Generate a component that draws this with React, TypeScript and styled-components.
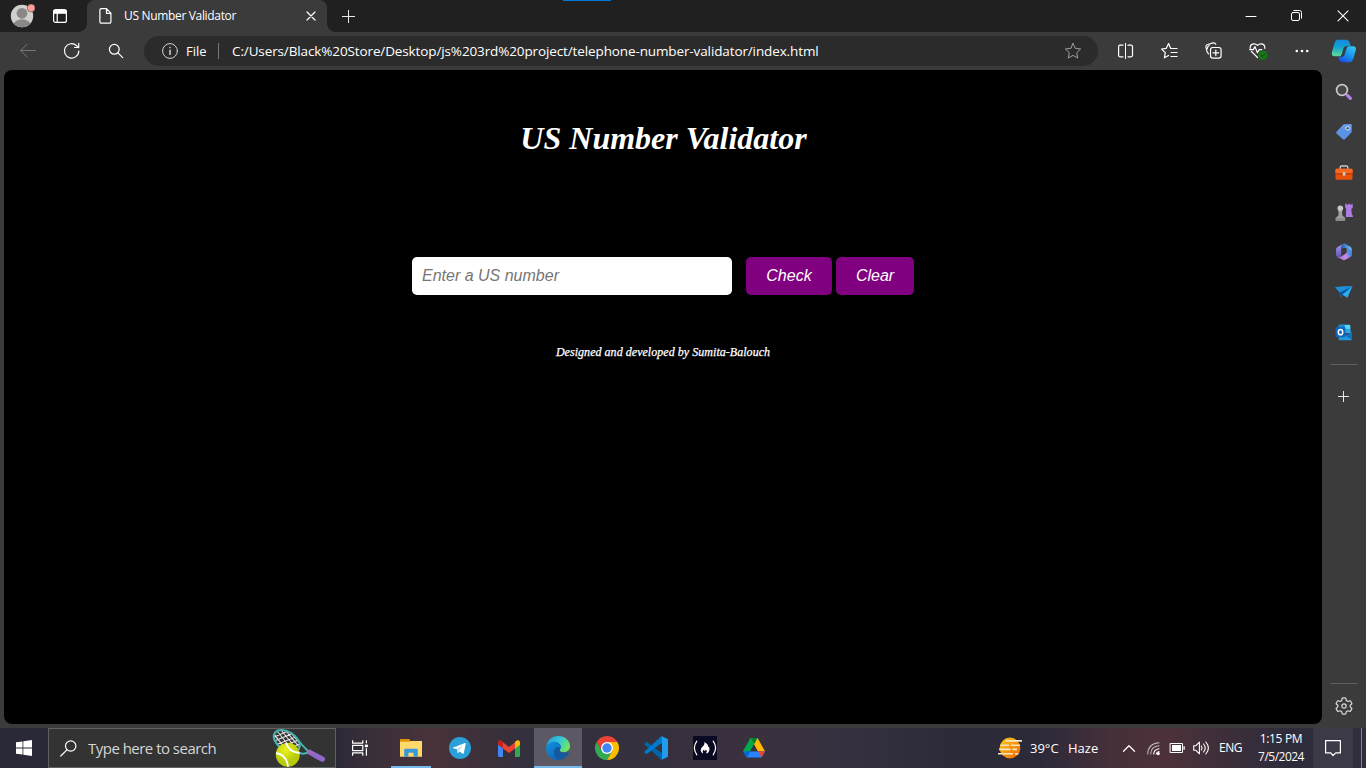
import React from "react";
import styled, { createGlobalStyle } from "styled-components";

const GlobalStyle = createGlobalStyle`
  * { box-sizing: border-box; }
  html, body { margin: 0; padding: 0; background: #3b3b3b; overflow: hidden; }
`;

const Screen = styled.div`
  width: 1366px;
  height: 768px;
  display: flex;
  flex-direction: column;
  background: #3b3b3b;
  overflow: hidden;
  position: relative;
  font-family: "Open Sans", "Noto Sans", sans-serif;
  color: #fff;
`;

const Glyph = styled.svg`
  display: block;
  flex: none;
  overflow: visible;
`;

const Text = styled.span<{ $size: number; $spacing?: number; $color?: string }>`
  font-size: ${(p) => p.$size}px;
  letter-spacing: ${(p) => p.$spacing ?? 0}px;
  color: ${(p) => p.$color ?? "#fff"};
  line-height: 20px;
  white-space: nowrap;
`;

const Slot = styled.div<{ $width: number; $height?: number }>`
  width: ${(p) => p.$width}px;
  height: ${(p) => (p.$height ? `${p.$height}px` : "100%")};
  flex: none;
  display: flex;
  align-items: center;
  justify-content: center;
`;

const TitleBar = styled.header`
  height: 32px;
  flex: none;
  display: flex;
  background: #202020;
`;

const Tab = styled.div`
  width: 240px;
  height: 32px;
  display: flex;
  align-items: center;
  padding: 0 11px 0 12px;
  border-radius: 8px 8px 0 0;
  background: #3b3b3b;
`;

const TabTitle = styled(Text)`
  flex: 1;
  margin-left: 12px;
`;

const WindowButtons = styled.div`
  display: flex;
  margin-left: auto;
`;

const DragStrip = styled.div`
  position: absolute;
  top: 0;
  left: 563px;
  width: 48px;
  height: 1px;
  background: #0078d4;
`;

const TabFlare = styled.div<{ $left: number; $side: "left" | "right" }>`
  position: absolute;
  top: 24px;
  left: ${(p) => p.$left}px;
  width: 8px;
  height: 8px;
  background: radial-gradient(circle at ${(p) => (p.$side === "left" ? "0 0" : "100% 0")}, transparent 7.5px, #3b3b3b 8px);
`;

const Toolbar = styled.div`
  height: 38px;
  flex: none;
  display: flex;
  align-items: center;
  padding: 0 0 0 6px;
`;

const AddressBar = styled.div`
  width: 954px;
  height: 30px;
  margin: 0 6px;
  padding: 0 15px 0 18px;
  display: flex;
  align-items: center;
  border-radius: 15px;
  background: #2b2b2b;
`;

const AddressDivider = styled.div`
  width: 1px;
  height: 16px;
  margin: 0 13px 0 11px;
  background: #777;
`;

const Scheme = styled(Text)`
  width: 21px;
  margin-left: 8px;
`;

const Url = styled(Text)`
  flex: 1;
`;

const Main = styled.div`
  height: 658px;
  flex: none;
  display: flex;
  padding: 0 0 4px 4px;
`;

const Page = styled.main`
  width: 1318px;
  height: 654px;
  display: flex;
  flex-direction: column;
  align-items: center;
  border-radius: 8px;
  background: #000;
`;

const Heading = styled.h1`
  margin: 50px 0 0;
  padding-left: 1px;
  font: italic bold 32px/37px "Liberation Serif", serif;
  color: #fff;
`;

const Form = styled.form`
  display: flex;
  margin-top: 100px;
`;

const NumberInput = styled.input`
  width: 320px;
  height: 38px;
  margin-right: 14px;
  padding: 0 10px;
  border: 0;
  border-radius: 5px;
  background: #fff;
  font: italic 16px "Liberation Sans", sans-serif;
  &::placeholder { color: #757575; }
`;

const ActionButton = styled.button<{ $width: number }>`
  width: ${(p) => p.$width}px;
  height: 38px;
  padding: 0;
  margin-right: 4px;
  border: 0;
  border-radius: 5px;
  background: #800080;
  color: #fff;
  font: italic 16px "Liberation Sans", sans-serif;
  &:last-child { margin-right: 0; }
`;

const Credit = styled.p`
  margin: 49px 0 0;
  font: italic 12px/16px "Liberation Serif", serif;
  letter-spacing: 0.04px;
  color: #fff;
  -webkit-text-stroke: 0.25px #fff;
`;

const Sidebar = styled.aside`
  width: 44px;
  display: flex;
  flex-direction: column;
  align-items: center;
  padding-top: 2px;
`;

const SidebarRule = styled.div<{ $push?: boolean }>`
  width: 28px;
  height: 1px;
  flex: none;
  margin-top: ${(p) => (p.$push ? "auto" : "12px")};
  background: #606060;
`;

const SettingsSlot = styled(Slot)`
  padding-top: 4px;
`;

const Taskbar = styled.footer`
  height: 40px;
  flex: none;
  display: flex;
  background: linear-gradient(90deg, #2a2937 0, #2a2937 330px, #3a2f39 375px, #49333a 430px, #3c303a 480px, #32303d 530px, #35303d 640px, #3b303e 750px, #35303f 850px, #2b2a38 960px, #2c2a39 1040px, #452f39 1110px, #4d3139 1165px, #3b2e3a 1230px, #2e2c3b 1290px, #302e3c 1366px);
`;

const SearchBox = styled.div`
  width: 288px;
  height: 40px;
  display: flex;
  align-items: center;
  padding: 0 9px 0 11px;
  border: 1px solid #606060;
  background: #333;
`;

const SearchLabel = styled(Text)`
  flex: 1;
  margin-left: 11px;
`;

const AppList = styled.div`
  display: flex;
  gap: 1px;
  margin-left: 3px;
`;

const AppButton = styled.div<{ $active?: boolean }>`
  width: 48px;
  height: 40px;
  display: flex;
  align-items: center;
  justify-content: center;
  position: relative;
  background: ${(p) => (p.$active ? "#5c5965" : "transparent")};
`;

const RunningMark = styled.i<{ $wide?: boolean }>`
  position: absolute;
  bottom: 0;
  left: ${(p) => (p.$wide ? 0 : 4)}px;
  right: ${(p) => (p.$wide ? 0 : 4)}px;
  height: 2px;
  background: #76b9ed;
`;

const Tray = styled.div`
  display: flex;
  align-items: center;
  margin-left: auto;
`;

const Weather = styled.div`
  width: 118px;
  display: flex;
  align-items: center;
`;

const Temperature = styled(Text)`
  width: 38px;
  margin-left: 8px;
`;

const Clock = styled.div`
  width: 64px;
  height: 40px;
  display: flex;
  flex-direction: column;
  align-items: center;
  padding-top: 2px;
  & > span { line-height: 18px; }
`;

const Notifications = styled.div`
  width: 40px;
  height: 40px;
  display: flex;
  align-items: center;
  justify-content: center;
  background: #3d3a48;
`;

const ShowDesktop = styled.div`
  width: 5px;
  height: 40px;
  margin-left: 8px;
  border-left: 1px solid #85838c;
`;

type IconProps = { w?: number; h?: number; color?: string; stroke?: number; children: React.ReactNode };

const Icon = ({ w = 24, h = 24, color = "#fff", stroke = 1, children }: IconProps) => (
  <Glyph width={w} height={h} viewBox={`0 0 ${w} ${h}`} fill="none" stroke={color} strokeWidth={stroke} strokeLinecap="round" strokeLinejoin="round">
    {children}
  </Glyph>
);

const Picture = ({ w = 24, h = 24, children }: IconProps) => (
  <Glyph width={w} height={h} viewBox={`0 0 ${w} ${h}`}>{children}</Glyph>
);

const Avatar = () => (
  <Picture>
    <defs><clipPath id="face"><circle cx="12" cy="12" r="11.2" /></clipPath></defs>
    <circle cx="12" cy="12" r="11.2" fill="#d2d0ce" />
    <g clipPath="url(#face)" fill="#8a8886">
      <circle cx="12" cy="9.3" r="5.4" />
      <ellipse cx="12" cy="21" rx="8.5" ry="5.7" />
    </g>
    <circle cx="21.2" cy="4" r="3.9" fill="#ff9f95" stroke="#333" strokeWidth=".5" />
  </Picture>
);

const Workspaces = () => (
  <Icon w={14} h={14} stroke={1.2}>
    <rect x=".6" y=".6" width="12.8" height="12.8" rx="2" />
    <path d="M1 1.5h12v2.7H1z" fill="#fff" /><path d="M4.2 4v9" />
  </Icon>
);

const DocumentIcon = () => (
  <Icon w={13} h={16} stroke={1.2}>
    <path d="M2.3.6h5.2l4.4 4.6v8.6a1.4 1.4 0 0 1-1.4 1.4H2.3A1.4 1.4 0 0 1 .9 13.8V2A1.4 1.4 0 0 1 2.3.6zM7.5.8v4.6h4.2" />
  </Icon>
);

const TabClose = () => (
  <Icon w={10} h={10} stroke={1.2}><path d="m1 1 8 8M9 1 1 9" /></Icon>
);

const WindowClose = () => (
  <Icon w={12} h={12} stroke={1.1}><path d="m1 .8 10 10M11 .8l-10 10" /></Icon>
);

const Plus = ({ size }: { size: number }) => (
  <Icon w={size + 1} h={size} color="#e8e8e8"><path d={`M${size / 2} 0v${size}M0 ${size / 2}h${size}`} strokeLinecap="butt" /></Icon>
);

const Copilot = () => (
  <Picture w={26} h={24}>
    <defs>
      <linearGradient id="cpA" x1=".3" y1="0" x2=".2" y2="1"><stop stopColor="#1689df" /><stop offset=".45" stopColor="#12a5cf" /><stop offset="1" stopColor="#65de98" /></linearGradient>
      <linearGradient id="cpB" x1=".8" y1="0" x2=".2" y2="1"><stop stopColor="#35c4f6" /><stop offset=".55" stopColor="#1591ee" /><stop offset="1" stopColor="#1c4be8" /></linearGradient>
    </defs>
    <path d="M19.5 7.2h2.2q4.2 0 3 4.2l-2.3 8.2q-1 3.6-4.4 3.6h-7q-2.2 0-2.9-2.6l-.7-2.9h1.8q2.2 0 2.8-2l2.2-6.5q.7-2 2.3-2z" fill="url(#cpB)" />
    <path d="M7 .8h8.6q2.3 0 3 2.7l1 3.5h-3.8q-2.4 0-3.2 2.6L10.8 15q-.7 2.2-2.6 2.2H4q-4.2 0-3-4.2l2.4-8.6Q4.4.8 7 .8z" fill="url(#cpA)" />
    <path d="M15.7 7h1.9q-1.3.5-1.8 2l-2.3 7q-.5 1.6-2 1.7H9.3q1.1-.5 1.6-2l2-6.4Q13.6 7 15.7 7z" fill="#34404c" />
  </Picture>
);

const SidebarSearch = () => (
  <Picture w={18} h={18}>
    <path d="M12.4 12.4l3 2.9" stroke="#b481e8" strokeWidth="3.2" strokeLinecap="round" />
    <circle cx="7" cy="7" r="5.4" fill="#464646" stroke="#c9c9c9" strokeWidth="1.7" />
  </Picture>
);

const ShoppingTag = () => (
  <Picture w={18} h={18}>
    <path d="M9.3 1.2 15.8 1q1 0 1 1l-.2 6.5q0 .7-.5 1.2l-6 6.3q-1.2 1.2-2.4 0L1.6 10.4Q.8 9.4 1.7 8.5L8 1.9q.6-.7 1.3-.7z" fill="#659cec" />
    <path d="m.9 9.4 6.3-5 9.4 4.5-6.5 7.1q-1.2 1.2-2.4 0L1.6 10.4z" fill="#4c80d8" opacity=".35" />
    <circle cx="12.6" cy="5.3" r="1.8" fill="#3b587e" stroke="#e3ecf8" strokeWidth="1" />
  </Picture>
);

const Toolbox = () => (
  <Picture w={18} h={16}>
    <g transform="translate(0 1)">
      <path d="M5.3 4V2q0-1 1-1h5.4q1 0 1 1v2" fill="none" stroke="#c9c7c5" strokeWidth="1.4" />
      <rect x=".5" y="3.8" width="17" height="11" rx="1.2" fill="#e8500e" />
      <path d="M.5 4.9q0-1.1 1.1-1.1h14.8q1.1 0 1.1 1.1v3.4H.5z" fill="#f56a20" /><path d="M.5 8.3h17v1.1H.5z" fill="#b93606" />
      <rect x="7.7" y="6.9" width="2.8" height="3.8" rx="1" fill="#ccc" />
    </g>
  </Picture>
);

const Games = () => (
  <Picture w={18} h={18}>
    <path d="M10.2.7h1.7v1.4h1.2V.7h2v1.4h1.2V.7h1.4v4l-1.4 1.2.6 5.2 1 2.2v.7h-7l.2-8.5-.9-1.2z" fill="#b07be4" />
    <circle cx="5.3" cy="5.3" r="2.8" fill="#c9c9c9" />
    <path d="M2.6 7.9h5.4l-1.1 1.2.6 3.6 2.6 2v3H.7v-3l2.6-2 .4-3.6z" fill="#a0a0a0" /><path d="M.7 15.2h9.4v2.6H.7z" fill="#8c8c8c" />
  </Picture>
);

const Microsoft365 = () => (
  <Picture w={18} h={18}>
    <defs>
      <linearGradient id="msA" x1="0" y1="0" x2="0" y2="1"><stop stopColor="#a79bec" /><stop offset="1" stopColor="#5f55b8" /></linearGradient>
      <linearGradient id="msB"><stop stopColor="#2458bb" /><stop offset="1" stopColor="#72c5f8" /></linearGradient>
      <linearGradient id="msC"><stop stopColor="#a86dce" /><stop offset=".6" stopColor="#c58be6" /><stop offset="1" stopColor="#6a7fe0" /></linearGradient>
    </defs>
    <path d="M8.4.7 2.2 4.2Q1 5 1 6.4v5.3q0 1.5 1.3 2.2Q6 15 6.2 11.5V5.7Q6 2.6 8.4.7z" fill="url(#msA)" />
    <path d="M8.4.7q.9-.5 1.8 0l5.1 3q1.4.8 1.4 2.5v3.3q-.2-1.7-1.7-2.4l-3.6-1.8q-2-1-3.6-.1L6.2 6.1Q5.9 2.4 8.4.7z" fill="url(#msB)" />
    <path d="M16.7 8.8v2.9q0 1.5-1.3 2.2l-5 2.9q-1.4.8-2.8 0l-5.3-2.9q2 .6 3.9-.5l4-2.3q1.6-.9 1.6-2.8V5.5l3.2 1.6q1.5.7 1.7 1.7z" fill="url(#msC)" />
    <path d="M11.8 5.5 15 7.1q1.5.7 1.7 1.9v2.7q0 1.2-.7 1.8-3.5-.4-4.2-4z" fill="#3f8fe8" opacity=".75" />
    <path d="m7 6.3 4 2.3-4 2.4z" fill="#3b3b3b" />
  </Picture>
);

const Drop = () => (
  <Picture w={18} h={14}>
    <path d="M.3 2.1 17.5 1.2 12.4 12.8 7.4 9.8 6 12.6 4.7 7.5z" fill="#2cacf0" />
    <path d="M.3 2.1 17.5 1.2 4.7 7.5z" fill="#1b8fd9" /><path d="M4.7 7.5 17.5 1.2 7.4 9.4 6 12.6z" fill="#0a549b" />
  </Picture>
);

const Outlook = () => (
  <Picture w={18} h={18}>
    <g transform="translate(.3 .7)">
      <path d="M3.4 2.2Q3.4 1 4.6 1h9.2Q15 1 15 2.2v7H3.4z" fill="#50d9ff" /><path d="M3.4 2.2Q3.4 1 4.6 1h4.8v4.2h-6z" fill="#138bd8" />
      <path d="M9.4 5.2H15v4H9.4z" fill="#28a8ea" /><path d="M3.4 9l6.8 2.6L16.6 8v7.2q0 1.3-1.3 1.3H4.6q-1.2 0-1.2-1.3z" fill="#2198df" /><path d="m10.3 12 6.3-4v8z" fill="#106ebe" />
      <rect x=".3" y="3.4" width="9.8" height="10.2" rx="1.2" fill="#0f65b9" />
      <ellipse cx="5.2" cy="8.5" rx="2.2" ry="2.6" fill="none" stroke="#fff" strokeWidth="1.5" />
    </g>
  </Picture>
);

const Tennis = () => (
  <Picture w={54} h={36}>
    <defs>
      <radialGradient id="ball" cx=".4" cy=".3"><stop stopColor="#eaf21b" /><stop offset="1" stopColor="#b7cb0c" /></radialGradient>
      <clipPath id="ballClip"><circle cx="15.8" cy="24.8" r="12" /></clipPath>
      <clipPath id="headClip"><ellipse cx="14.8" cy="11" rx="14.2" ry="8.6" transform="rotate(33 14.8 11)" /></clipPath>
    </defs>
    <g clipPath="url(#headClip)" stroke="#e4dfe0" strokeWidth="1.1">
      <path d="M0 8 16 1M0 12 22 3M1 16 26 6M4 19 29 9M8 22 30 13M1 3l16 20M5 1l17 21M9 0l17 21M14 1l15 18M19 3l11 13M0 7l12 16" />
    </g>
    <ellipse cx="14.8" cy="11" rx="14.4" ry="9" transform="rotate(33 14.8 11)" fill="none" stroke="#45b3ae" strokeWidth="2" />
    <path d="M24.5 8q6 8 12 13.5M36.5 21.8q-5 3.4-10 .6" fill="none" stroke="#45b3ae" strokeWidth="2" />
    <circle cx="15.8" cy="24.8" r="12" fill="url(#ball)" />
    <g fill="none" stroke="#fff" strokeWidth="1.8" clipPath="url(#ballClip)"><path d="M3 23q12 1 13 14M14 12q2 10 14 11" /></g>
    <path d="m36 21.4 14.5 7.8" stroke="#a066c2" strokeWidth="5" /><path d="m43 25.2 7.6 4" stroke="#8e68cb" strokeWidth="5" strokeLinecap="round" />
  </Picture>
);

const Explorer = () => (
  <Picture w={22} h={18}>
    <path d="M0 1.2Q0 0 1.2 0h7l2.4 2H21q1 0 1 1v14H0z" fill="#f4b83e" /><path d="M0 1.2Q0 0 1.2 0h8.3v2.6H0z" fill="#d99503" />
    <path d="M0 3h10l1.5-1H22v15.8H0z" fill="#ffd969" /><path d="M4.2 17.8v-7q0-1 1-1h11.6q1 0 1 1v7h-4.3v-4H8.4v4z" fill="#3997dd" />
  </Picture>
);

const Telegram = () => (
  <Picture w={22} h={22}>
    <circle cx="11" cy="11" r="11" fill="#2a9fd8" />
    <path d="M3.8 10.8 16 6q1-.3.8.8l-2 9.4q-.2 1-1.2.5l-3-2.3-1.5 1.5q-.5.5-.6-.3l-.4-3.3-3.9-1.1q-.9-.2-.4-.4z" fill="#fff" /><path d="m8.4 12 6-4-4.5 5.2-.8 2.6z" fill="#b7d8e9" />
  </Picture>
);

const Gmail = () => (
  <Picture w={22} h={17}>
    <path d="M0 3h5v14H1.5Q0 17 0 15.5z" fill="#4285f4" /><path d="M17 3h5v12.5q0 1.5-1.5 1.5H17z" fill="#34a853" />
    <path d="M5 2.2 11 7l6-4.8v6.3L11 13 5 8.5z" fill="#ea4335" />
    <path d="M0 2.5Q0 .8 1.5.3q1.3-.5 2.5.8l1 .8v6.6L0 4.7z" fill="#c5221f" /><path d="M22 2.5Q22 .8 20.5.3q-1.3-.5-2.5.8l-1 .8v6.6l5-3.8z" fill="#fbbc04" />
  </Picture>
);

const Edge = () => (
  <Picture>
    <defs>
      <linearGradient id="edgeTop" x1="0" y1=".2" x2="1" y2=".6"><stop stopColor="#269bdc" /><stop offset=".5" stopColor="#36c6d7" /><stop offset="1" stopColor="#70eb58" /></linearGradient>
      <linearGradient id="edgeBlue" x1="0" y1="0" x2=".6" y2="1"><stop stopColor="#1593d8" /><stop offset="1" stopColor="#0867c4" /></linearGradient>
    </defs>
    <path d="M.4 10.5C1.3 4 6 0 12.2 0 19.2 0 24 5 24 10c0 4-3.2 6-6.2 6-2.4 0-4.2-.8-4.2-1.8 0-.9 1.2-1 1.2-3.2 0-2.6-2.7-4.3-6-4.3-3.8 0-6.9 1.8-8.4 3.8z" fill="url(#edgeTop)" />
    <path d="M.1 12C.1 8.5 4 5.8 8.3 5.8c3.6 0 6.6 2 6.6 5.2 0 1-.4 1.7-.7 2.1C13.4 10.8 8 12 8 16.6c0 4 3.5 6.5 6.4 7.1C6.5 25.2 0 19.7.1 12z" fill="url(#edgeBlue)" />
    <path d="M8 16.3c0-3 2-5 4.4-5 .8 0 1.6.5 1.8 1.8-.5.7-.7 1-.7 1.5 0 1.2 2 2.3 4.6 2.3 2.2 0 3.5-.8 4.2-1 .6-.2.8.1.5.8-1.4 3.3-4.3 6.5-8.5 7.1C10.7 23.3 8 20.3 8 16.3z" fill="#1558a0" />
  </Picture>
);

const Chrome = () => (
  <Picture>
    <path d="M1.6 6A12 12 0 0 1 22.4 6H12L6.8 15z" fill="#ea4335" /><path d="M1.6 6A12 12 0 0 0 12 24l5.2-9H6.8z" fill="#34a853" /><path d="M22.4 6A12 12 0 0 1 12 24l5.2-9L12 6z" fill="#fbbc04" />
    <circle cx="12" cy="12" r="6" fill="#fff" /><circle cx="12" cy="12" r="4.7" fill="#4285f4" />
  </Picture>
);

const VSCode = () => (
  <Picture>
    <path d="M.5 7.5 2 6.2q.6-.5 1.2 0L18 17.2v6.5q-.8 0-1.5-.7L.5 8.5q-.5-.5 0-1z" fill="#0065a9" />
    <path d="M.5 16.5 2 17.8q.6.5 1.2 0L18 6.8V.3q-.8 0-1.5.7L.5 15.5q-.5.5 0 1z" fill="#007acc" />
    <path d="m17.7.2 5.5 2.6q.8.4.8 1.3v15.8q0 .9-.8 1.3l-5.5 2.6q-.8.3-1.4-.4 1.5 1 1.7-1V1.6q-.2-2-1.7-1 .6-.7 1.4-.4z" fill="#1f9cf0" />
  </Picture>
);

const FreeCodeCamp = () => (
  <Picture>
    <path d="M0 0h24v24H0z" fill="#0a0a23" />
    <path d="M3.8 5.2q-4.8 6.8 0 13.6M20.2 5.2q4.8 6.8 0 13.6" fill="none" stroke="#fff" strokeWidth="1.2" strokeLinecap="round" />
    <path d="M11.2 6q4.4 2.2 3.8 4.9.8.2.7-.9 2.1 4.5-1.2 7.3h-1.6q2-2.6-.3-3.7.2 1.2-.7 1.3-1.1 0-.7-1.5-2.5 1.4-.9 3.9H9.4q-3-2.5-.5-6Q12.3 8.4 11.2 6z" fill="#fff" />
  </Picture>
);

const Drive = () => (
  <Picture w={22} h={20}>
    <path d="M7.4 0h7.2L11 6.5 3.6 19.6 0 13.2z" fill="#00a94b" /><path d="M7.4 0h7.2L22 13.2h-7.3z" fill="#ffba00" />
    <path d="M7.4 0h7.2L11 6.5z" fill="#00832d" /><path d="M7.3 13.2H22l-3.5 6.4h-15z" fill="#2684fc" />
    <path d="m0 13.2 3.6 6.4 3.7-6.4z" fill="#0066da" /><path d="M14.7 13.2H22l-3.5 6.4z" fill="#ea4335" />
    <path d="m11 6.5 3.7 6.7H7.3z" fill="#3b303e" />
  </Picture>
);

const Haze = () => (
  <Picture w={24} h={22}>
    <defs><linearGradient id="sun" x1="0" y1="0" x2="1" y2="1"><stop stopColor="#ffca13" /><stop offset="1" stopColor="#ee6308" /></linearGradient></defs>
    <circle cx="12" cy="11" r="10.4" fill="url(#sun)" />
    <path d="M7.5 3.9H24M2.5 8.2h8.5m2 0h9M1 12.4h11.5m2 0H19M0 16.8h15m2 0h3.5" stroke="#f6e6c4" strokeWidth="1.6" />
  </Picture>
);

const apps: { name: string; icon: React.ReactNode; running?: boolean; active?: boolean }[] = [
  { name: "File Explorer", icon: <Explorer />, running: true },
  { name: "Telegram", icon: <Telegram /> },
  { name: "Gmail", icon: <Gmail /> },
  { name: "Edge", icon: <Edge />, running: true, active: true },
  { name: "Chrome", icon: <Chrome /> },
  { name: "VS Code", icon: <VSCode /> },
  { name: "freeCodeCamp", icon: <FreeCodeCamp /> },
  { name: "Drive", icon: <Drive /> },
];

const sidebarIcons = [<SidebarSearch />, <ShoppingTag />, <Toolbox />, <Games />, <Microsoft365 />, <Drop />, <Outlook />];

export default function App() {
  return (
    <Screen>
      <GlobalStyle />
      <TitleBar>
        <Slot $width={44}><Avatar /></Slot>
        <Slot $width={32}><Workspaces /></Slot>
        <Slot $width={11} />
        <Tab>
          <DocumentIcon />
          <TabTitle $size={12} $spacing={-0.33}>US Number Validator</TabTitle>
          <TabClose />
        </Tab>
        <Slot $width={44}><Plus size={13} /></Slot>
        <WindowButtons>
          <Slot $width={46}><Icon w={10} h={2}><path d="M0 1.5h10" /></Icon></Slot>
          <Slot $width={46}>
            <Icon w={12} h={12}><rect x=".5" y="2.5" width="8" height="8" rx="1.5" /><path d="M2.8.5h5.7a2 2 0 0 1 2 2v5.7" /></Icon>
          </Slot>
          <Slot $width={46}><WindowClose /></Slot>
        </WindowButtons>
      </TitleBar>
      <TabFlare $left={79} $side="left" />
      <TabFlare $left={327} $side="right" />
      <DragStrip />

      <Toolbar>
        <Slot $width={44}><Icon w={16} h={14} color="#777"><path d="M15.5 6.5H.8M7 .2.7 6.5 7 12.8" /></Icon></Slot>
        <Slot $width={44}><Icon w={18} h={18} stroke={1.2}><path d="M15.8 9A7.2 7.2 0 1 1 13.6 3.7L15.6 5.5M15.7 1.3v4.2h-4.2" /></Icon></Slot>
        <Slot $width={44}><Icon w={16} h={16} stroke={1.2}><circle cx="6.3" cy="6.3" r="4.9" /><path d="m9.9 9.9 4.8 4.8" /></Icon></Slot>
        <AddressBar>
          <Icon w={16} h={16} color="#d2d2d2"><circle cx="8" cy="8" r="7.4" /><path d="M8 7v4.5M8 4.4v.3" stroke="#fff" strokeWidth="1.2" /></Icon>
          <Scheme $size={13}>File</Scheme>
          <AddressDivider />
          <Url $size={13.5} $spacing={-0.12}>C:/Users/Black%20Store/Desktop/js%203rd%20project/telephone-number-validator/index.html</Url>
          <Icon w={18} h={18} color="#a0a0a0"><path d="m8 1.5 2.3 4.8 5.3.7-3.9 3.7 1 5.3L8 13.4 3.3 16l1-5.3L.4 7l5.3-.7z" /></Icon>
        </AddressBar>
        <Slot $width={44}><Icon w={16} h={16} stroke={1.2}><path d="M5 2.2H2Q.6 2.2.6 3.7v8.6q0 1.5 1.4 1.5h3M10 2.2h3q1.5 0 1.5 1.5v8.6q0 1.5-1.5 1.5h-3" /><path d="M7.5 0v16" stroke="#fff" strokeWidth="1" strokeLinecap="butt" /></Icon></Slot>
        <Slot $width={44}><Icon w={18} h={18} stroke={1.2}><path d="M9.6 6.3 7.6 1.5 5.3 6.3l-4.7.7 3.7 3.6-.9 5.2 4.2-2.3M9.6 6.5h6.5M10 10.5h6.1M10 14.5h6.1" /></Icon></Slot>
        <Slot $width={44}><Icon w={18} h={18} stroke={1.2}><rect x="5.5" y="5.5" width="10.6" height="10.6" rx="2.3" /><path d="M10.8 8v5.6M8 10.8h5.6M3.5 11.8 2.2 10 .9 5.1Q.5 3.5 2.1 2.8L8 .9q2-.4 2.8 1.3M2.4 6.5Q2.2 4.3 4.2 3.5" /></Icon></Slot>
        <Slot $width={44}>
          <Icon w={18} h={18} stroke={1.2}>
            <path d="M1.2 6.4Q.8 2.3 4.5 1.8q2.3-.2 4 1.6 1.7-1.8 4-1.6 3.7.5 3.3 4.6M2.5 9.5l6 6M.7 7.6h3.6l1.7-3 2.3 6 2-3h2.5" />
            <circle cx="13.9" cy="13.2" r="4.5" fill="#107c10" stroke="none" /><path d="m12 13.2 1.4 1.4 2.6-2.7" stroke="#2c3f2c" />
          </Icon>
        </Slot>
        <Slot $width={44}><Icon w={14} h={4}><g fill="#fff" stroke="none"><circle cx="1.8" cy="2" r="1.3" /><circle cx="7" cy="2" r="1.3" /><circle cx="12.2" cy="2" r="1.3" /></g></Icon></Slot>
        <Slot $width={40}><Copilot /></Slot>
      </Toolbar>

      <Main>
        <Page>
          <Heading>US Number Validator</Heading>
          <Form onSubmit={(e) => e.preventDefault()}>
            <NumberInput placeholder="Enter a US number" />
            <ActionButton type="button" $width={86}>Check</ActionButton>
            <ActionButton type="button" $width={78}>Clear</ActionButton>
          </Form>
          <Credit>Designed and developed by Sumita-Balouch</Credit>
        </Page>
        <Sidebar>
          {sidebarIcons.map((icon, i) => <Slot key={i} $width={44} $height={40}>{icon}</Slot>)}
          <SidebarRule />
          <Slot $width={44} $height={63}><Plus size={11} /></Slot>
          <SidebarRule $push />
          <SettingsSlot $width={44} $height={40}>
            <Icon w={18} h={18} color="#d8d8d8" stroke={1.2}>
              <path d="M7.2 1.2q1.8-.5 3.6 0l.5 2.3 1.5.9 2.3-.7q1.2 1.3 1.8 3L15.2 8.3v1.6l1.7 1.6q-.6 1.8-1.8 3l-2.3-.7-1.5.9-.5 2.2q-1.8.5-3.6 0l-.5-2.2-1.5-.9-2.3.7q-1.2-1.2-1.8-3l1.7-1.6V8.3L1.1 6.7q.6-1.7 1.8-3l2.3.7 1.5-.9z" /><circle cx="9" cy="9" r="2.2" />
            </Icon>
          </SettingsSlot>
        </Sidebar>
      </Main>

      <Taskbar>
        <Slot $width={48}><Picture w={16} h={16}><path d="M0 2.3 6.5 1.4v6.2H0zM7.3 1.3 16 0v7.6H7.3zM0 8.4h6.5v6.2L0 13.7zM7.3 8.4H16V16l-8.7-1.3z" fill="#fff" /></Picture></Slot>
        <SearchBox>
          <Icon w={17} h={17} stroke={1.2}><circle cx="10.7" cy="6" r="5.2" /><path d="M6.9 9.8.8 16" /></Icon>
          <SearchLabel $size={15} $spacing={-0.52} $color="#d5d5d5">Type here to search</SearchLabel>
          <Tennis />
        </SearchBox>
        <Slot $width={48}>
          <Icon w={16} h={16} stroke={1.2}><path d="M.6.3v2.9h10.2V.3M.6 15.7v-2.9h10.2v2.9M.6 5.4h10.2v5.2H.6zM14.4.3v3M14.4 8.2v7.5" strokeLinecap="butt" /><path d="M12.9 4.6h3v2.6h-3z" fill="#fff" stroke="none" /></Icon>
        </Slot>
        <AppList>
          {apps.map((app) => (
            <AppButton key={app.name} $active={app.active}>
              {app.icon}
              {app.running && <RunningMark $wide={app.active} />}
            </AppButton>
          ))}
        </AppList>
        <Tray>
          <Weather>
            <Haze />
            <Temperature $size={13}>39°C</Temperature>
            <Text $size={13}>Haze</Text>
          </Weather>
          <Slot $width={26}><Icon w={12} h={7} stroke={1.3}><path d="m.5 6.3 5.5-5.5 5.5 5.5" /></Icon></Slot>
          <Slot $width={24}>
            <Icon w={14} h={12} stroke={1.1}><g stroke="#bdb8be"><path d="M.7 12Q1.2 1.5 12 .8M3.7 12Q4 4.5 12 3.8" /></g><path d="M6.7 12Q7 7.5 12 6.8M9.3 12q.3-2.2 2.7-2.5" /><circle cx="11.3" cy="11.6" r="1" fill="#fff" /></Icon>
          </Slot>
          <Slot $width={23}><Icon w={15} h={10}><rect x=".5" y=".5" width="12" height="9" /><path d="M2 2h9v6H2z" fill="#fff" stroke="none" /><path d="M14.1 3.2v3.6" strokeWidth="1.3" strokeLinecap="butt" /></Icon></Slot>
          <Slot $width={24}><Icon w={17} h={14} stroke={1.1}><path d="M.7 4.7h2.2L6.4 1.2v11.6L2.9 9.3H.7zM8.3 5q1.5 2 0 4M10.5 3q3.5 4 0 8M12.8 1q5.2 6 0 12" /></Icon></Slot>
          <Slot $width={35}><Text $size={12} $spacing={-0.55}>ENG</Text></Slot>
          <Slot $width={1} />
          <Clock>
            <Text $size={12} $spacing={-0.35}>1:15 PM</Text>
            <Text $size={12} $spacing={-0.5}>7/5/2024</Text>
          </Clock>
          <Notifications><Icon w={16} h={16} stroke={1.2}><path d="M.6.6h14.8v12.3h-4.6L8 15.5l-2.2-2.6H.6z" /></Icon></Notifications>
          <ShowDesktop />
        </Tray>
      </Taskbar>
    </Screen>
  );
}
